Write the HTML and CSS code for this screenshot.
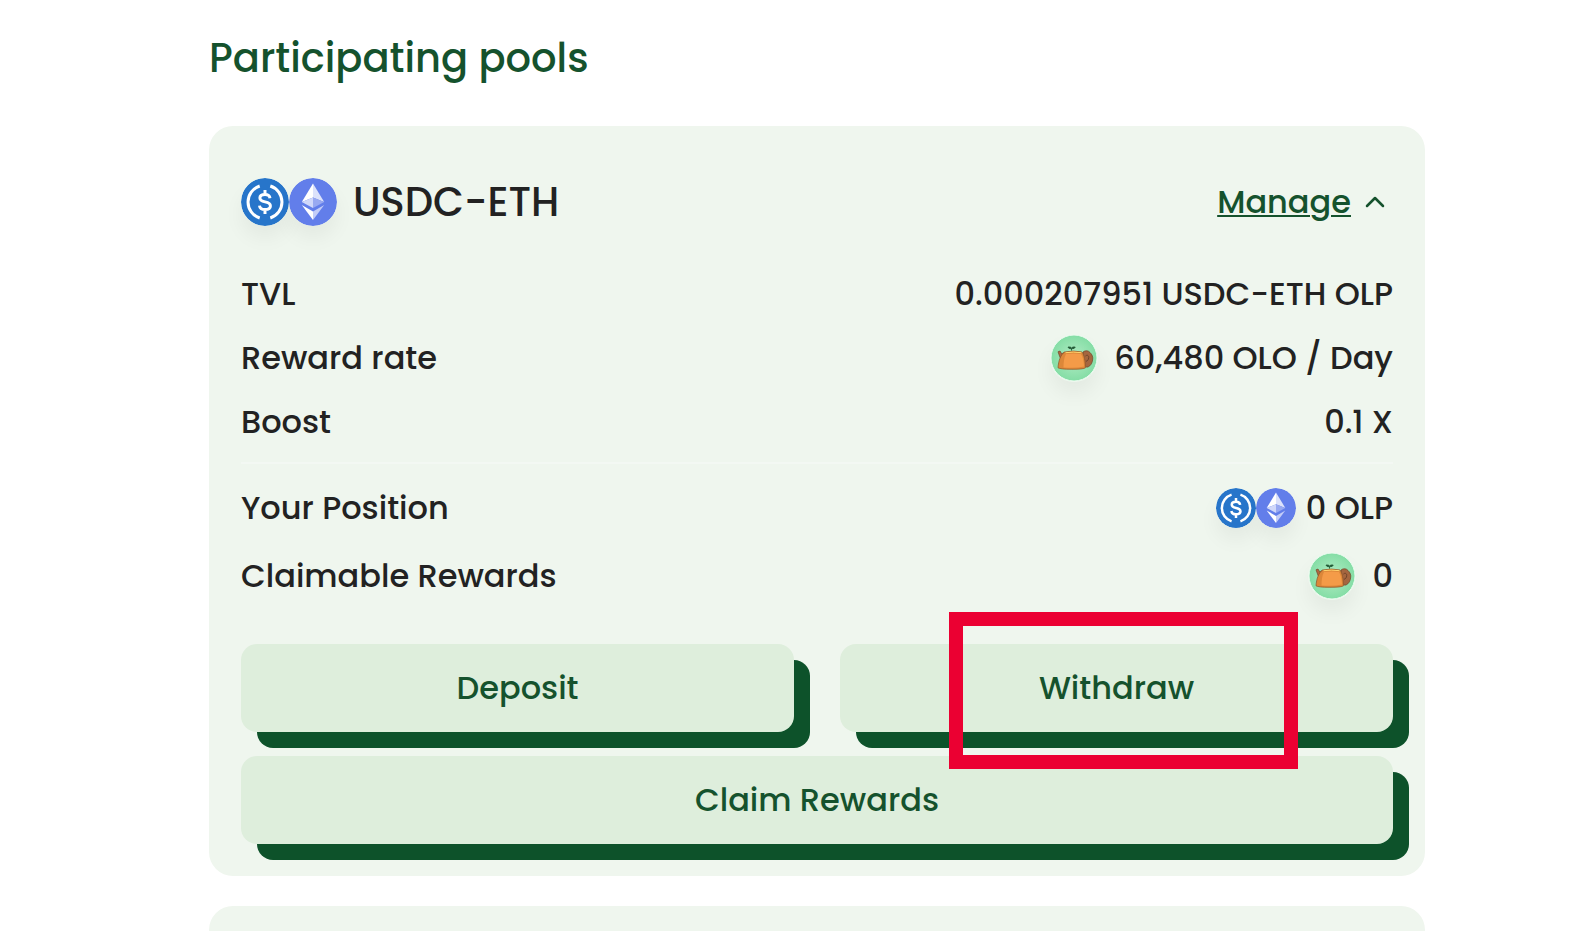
FILE: index.html
```
<!DOCTYPE html>
<html lang="en">
<head>
    <meta charset="UTF-8">
    <meta name="viewport" content="width=device-width, initial-scale=1.0">
    <title>Participating pools</title>
    <link rel="stylesheet" href="styles.css">
</head>
<body>
    <!-- token icons, reused below -->
    <svg class="sprite" aria-hidden="true">
        <symbol id="usdc" viewBox="0 0 48 48">
            <circle cx="24" cy="24" r="24" fill="#2775ca"/>
            <g fill="none" stroke="#fff" stroke-width="3">
                <path d="M18.700 8a16.800 16.800 0 0 0 0 32M29.300 8a16.800 16.800 0 0 1 0 32"/>
                <path d="M29 20.200c-.4-2.600-2.200-3.700-5-3.700-3.200 0-5.100 1.300-5.100 3.500 0 2.400 1.900 3.200 5.200 3.900 3.500.7 5.300 1.700 5.300 4.100 0 2.400-2.100 3.600-5.400 3.600-3.300 0-5.200-1.300-5.500-4M24 12v4.500M24 31.500V36"/>
            </g>
        </symbol>
        <symbol id="eth" viewBox="0 0 48 48">
            <circle cx="24" cy="24" r="24" fill="#627eea"/>
            <path fill="#fff" d="M24 5.500 12.800 24 24 19.500z"/>
            <path fill="#dce2fb" d="M24 5.500v14L35.200 24z"/>
            <path fill="#d0d8fa" d="M12.800 24 24 30V19.500z"/>
            <path fill="#98a9f1" d="M24 19.500V30l11.200-6z"/>
            <path fill="#fff" d="M12.800 27 24 42v-8.500z"/>
            <path fill="#c3cdf8" d="M24 33.500V42l11.200-15z"/>
        </symbol>
        <symbol id="olo" viewBox="0 0 48 48">
            <radialGradient id="olo-bg">
                <stop offset="0" stop-color="#b2ecc5"/>
                <stop offset="1" stop-color="#84dda5"/>
            </radialGradient>
            <circle cx="24" cy="24" r="23" fill="url(#olo-bg)" stroke="#e9fbef" stroke-width="1"/>
            <path d="M33 18c2-1.800 5.500-1.600 7 .5 2 1.800 3.300 4.500 2.600 7.500-.4 3.500-2.600 7-6.100 7.200L33.500 30z" fill="#a5663f" stroke="#70452b" stroke-width=".7"/>
            <path d="M35.500 22c1.800-1.500 3.500-.3 3.200 1.800-.2 2-1.200 3.200-2.700 3.500" fill="none" stroke="#70452b" stroke-width="1"/>
            <path d="m8 17.800 2-.8 1.700 2.800 3-1.500-1 6.500-3.500-1z" fill="#b0683f" stroke="#70452b" stroke-width=".7"/>
            <path d="M14.500 18q9-2 17.500 0c2.300 3 3.200 9 3.500 15.800q-2 1.500-13.600 1.500T8 33.800c.5-7 2.500-12.800 6.500-15.800z" fill="#dc8739" stroke="#8a5228" stroke-width=".7"/>
            <path d="M16 20q8-1 15 0c2 3 2.700 7.500 3 12.500q-8 2-20.500 1c0-5 .5-10 2.500-13.500z" fill="#f49b48"/>
            <path d="M15.500 18.700q8-1.300 16 0" fill="none" stroke="#ffd46d" stroke-width="1"/>
            <path d="M21.500 16.600v-2c-2 .2-3-.3-3.500-1.500 2-.2 3.100 0 3.500 1.100.6-1.100 2-1.400 3.700-1.100-.5 1.300-1.700 1.700-3.500 1.500" fill="#245b38" stroke="#245b38" stroke-width=".9"/>
        </symbol>
    </svg>

    <main class="container">
        <h1 class="title">Participating pools</h1>

        <section class="pool">
            <div class="pool-header">
                <div class="icons">
                    <svg class="icon"><use href="#usdc"/></svg>
                    <svg class="icon"><use href="#eth"/></svg>
                </div>
                <h2 class="pool-name">USDC-ETH</h2>
                <a class="manage" href="#">
                    <span class="manage-text">Manage</span>
                    <svg class="chevron" viewBox="0 0 36 36"><path d="m10 22 8-8 8 8"/></svg>
                </a>
            </div>

            <dl class="stats">
                <div class="row">
                    <dt>TVL</dt>
                    <dd>0.000207951 USDC-ETH OLP</dd>
                </div>
                <div class="row">
                    <dt>Reward rate</dt>
                    <dd><svg class="icon"><use href="#olo"/></svg>60,480 OLO / Day</dd>
                </div>
                <div class="row">
                    <dt>Boost</dt>
                    <dd>0.1 X</dd>
                </div>
            </dl>

            <dl class="stats position">
                <div class="row">
                    <dt>Your Position</dt>
                    <dd class="pair">
                        <span class="icons">
                            <svg class="icon small"><use href="#usdc"/></svg>
                            <svg class="icon small"><use href="#eth"/></svg>
                        </span>
                        0 OLP
                    </dd>
                </div>
                <div class="row">
                    <dt>Claimable Rewards</dt>
                    <dd><svg class="icon"><use href="#olo"/></svg>0</dd>
                </div>
            </dl>

            <div class="actions">
                <button type="button" class="btn">Deposit</button>
                <div class="highlighted">
                    <button type="button" class="btn">Withdraw</button>
                    <span class="highlight"></span>
                </div>
                <button type="button" class="btn wide">Claim Rewards</button>
            </div>
        </section>

        <section class="pool"></section>
    </main>
</body>
</html>
```
FILE: styles.css
```
* { box-sizing: border-box; }
body { margin: 0; background: #fff; color: #222; font-family: Poppins, Inter, sans-serif; font-size: 32px; font-weight: 500; line-height: 48px; }
h1, h2, dl, dd { margin: 0; font-weight: 500; }

.sprite { position: absolute; width: 0; height: 0; }
.container { display: flex; flex-direction: column; height: 100vh; padding: 28px 145px 0 209px; overflow: hidden; }
.title { flex: none; margin-bottom: 38px; color: #15522d; font-size: 40px; line-height: 60px; }

.pool { flex: none; min-height: 200px; margin-bottom: 30px; padding: 52px 32px 32px; border-radius: 24px; background: #eff6ee; }
.pool-header { display: flex; align-items: center; margin-bottom: 44px; }
.pool-name { margin-left: 16px; font-size: 40px; }

.icons { display: flex; }
.icon { flex: none; width: 48px; height: 48px; border-radius: 50%; box-shadow: 0 12px 20px rgba(0, 0, 0, 0.05); }
.icon.small { width: 40px; height: 40px; }

.manage { display: flex; align-items: center; gap: 6px; margin-left: auto; color: #15522d; text-decoration: none; }
.manage-text { text-decoration: underline; text-decoration-thickness: 2px; text-underline-offset: 2px; }
.chevron { width: 36px; height: 36px; fill: none; stroke: currentColor; stroke-width: 2.5; stroke-linecap: round; stroke-linejoin: round; }

.stats { display: grid; gap: 16px; }
.position { gap: 20px; margin-top: 16px; padding-top: 20px; border-top: 2px solid #f3f8f3; }
.row { display: flex; justify-content: space-between; }
.row dd { display: flex; align-items: center; gap: 16px; }
.row .pair { gap: 10px; }

.actions { display: grid; grid-template-columns: 1fr 1fr; gap: 24px 46px; margin-top: 44px; }
.btn { width: 100%; height: 88px; border: 0; border-radius: 16px; background: #deeedc; box-shadow: 16px 16px 0 #0d522a; color: #15522d; font: inherit; cursor: pointer; }
.wide { grid-column: 1 / -1; }

/* red frame over the withdraw button */
.highlighted { position: relative; height: 88px; }
.highlight { position: absolute; z-index: 1; top: -32px; right: 95px; bottom: -37px; left: 109px; border: 14px solid #eb0032; pointer-events: none; }
```
